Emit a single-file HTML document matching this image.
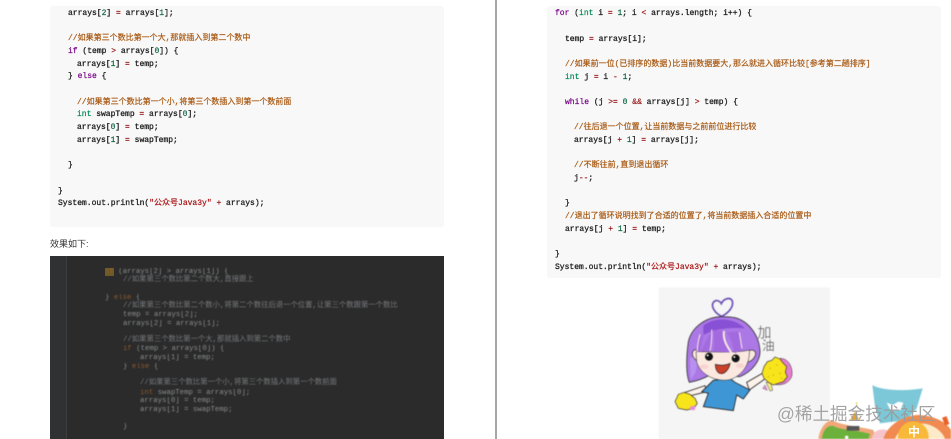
<!DOCTYPE html>
<html><head><meta charset="utf-8"><style>
html,body{margin:0;padding:0;background:#fff;width:951px;height:439px;overflow:hidden}
.a{position:absolute}
.c{position:absolute;margin-top:2px;font:8px/12px "Liberation Mono","Noto Sans CJK SC",monospace;white-space:pre;color:#222;-webkit-text-stroke:.3px #222;filter:blur(.35px)}
.m{color:#a85a14;-webkit-text-stroke:.2px #a85a14}
.k{color:#770088;-webkit-text-stroke:.2px #770088}
.t{color:#008855;-webkit-text-stroke:.2px #008855}
.n{color:#116644;-webkit-text-stroke:.2px #116644}
.o{color:#981a1a;-webkit-text-stroke:.2px #981a1a}
.s{color:#aa1111;-webkit-text-stroke:.2px #aa1111}
.d{position:absolute;font:7.35px/11px "Liberation Mono","Noto Sans CJK SC",monospace;white-space:pre;color:#8a8c8e;filter:blur(.45px)}
.d b{font-weight:normal;color:#8f5a2e}
.d u{text-decoration:none;color:#77797c}
</style></head><body>
<div class="a" style="left:50px;top:6px;width:394px;height:221px;background:#f8f8f8;border-radius:3px"></div>
<div class="a" style="left:547px;top:6px;width:394px;height:272px;background:#f8f8f8;border-radius:3px"></div>
<div class="a" style="left:495px;top:0;width:1.5px;height:439px;background:#a6a6a6"></div>

<div class="c" style="left:68px;top:6px">arrays[<span class="n">2</span>] <span class="o">=</span> arrays[<span class="n">1</span>];</div>
<div class="c m" style="left:68px;top:31px">//如果第三个数比第一个大,那就插入到第二个数中</div>
<div class="c" style="left:68px;top:44px"><span class="k">if</span> (temp <span class="o">&gt;</span> arrays[<span class="n">0</span>]) {</div>
<div class="c" style="left:77px;top:57px">arrays[<span class="n">1</span>] <span class="o">=</span> temp;</div>
<div class="c" style="left:68px;top:69px">} <span class="k">else</span> {</div>
<div class="c m" style="left:77px;top:95px">//如果第三个数比第一个小,将第三个数插入到第一个数前面</div>
<div class="c" style="left:77px;top:107px"><span class="t">int</span> swapTemp <span class="o">=</span> arrays[<span class="n">0</span>];</div>
<div class="c" style="left:77px;top:120px">arrays[<span class="n">0</span>] <span class="o">=</span> temp;</div>
<div class="c" style="left:77px;top:133px">arrays[<span class="n">1</span>] <span class="o">=</span> swapTemp;</div>
<div class="c" style="left:68px;top:158px">}</div>
<div class="c" style="left:58px;top:184px">}</div>
<div class="c" style="left:58px;top:196px">System.out.println(<span class="s">"公众号Java3y"</span> <span class="o">+</span> arrays);</div>

<div class="a" style="left:50px;top:238px;font:9px/12px 'Liberation Sans','Noto Sans CJK SC',sans-serif;color:#333;filter:blur(.25px)">效果如下:</div>

<div class="a" style="left:50px;top:256px;width:394px;height:183px;background:#2b2b2b;overflow:hidden">
<div class="d" style="left:55px;top:-8px"><u>//如果第三个数</u></div>
</div>
<div class="a" style="left:50px;top:256px;width:16px;height:183px;background:#303132;border-right:1px solid #3d3f41"></div>
<div class="a" style="left:105px;top:268px;width:9px;height:8px;background:#6f5a25"></div>
<div class="d" style="left:105px;top:266.5px"><b>if</b> (arrays[2] &gt; arrays[1]) {</div>
<div class="d" style="left:123px;top:274.5px"><u>//如果第三个数比第二个数大,直接跟上</u></div>
<div class="d" style="left:105px;top:292.5px">} <b>else</b> {</div>
<div class="d" style="left:123px;top:300.5px"><u>//如果第三个数比第二个数小,将第二个数往后退一个位置,让第三个数跟第一个数比</u></div>
<div class="d" style="left:123px;top:309.5px">temp = arrays[2];</div>
<div class="d" style="left:123px;top:318.5px">arrays[2] = arrays[1];</div>
<div class="d" style="left:123px;top:334.5px"><u>//如果第三个数比第一个大,那就插入到第二个数中</u></div>
<div class="d" style="left:123px;top:343.5px"><b>if</b> (temp &gt; arrays[0]) {</div>
<div class="d" style="left:140px;top:352.5px">arrays[1] = temp;</div>
<div class="d" style="left:123px;top:361.5px">} <b>else</b> {</div>
<div class="d" style="left:140px;top:377.5px"><u>//如果第三个数比第一个小,将第三个数插入到第一个数前面</u></div>
<div class="d" style="left:140px;top:387.5px"><b>int</b> swapTemp = arrays[0];</div>
<div class="d" style="left:140px;top:395.5px">arrays[0] = temp;</div>
<div class="d" style="left:140px;top:404.5px">arrays[1] = swapTemp;</div>
<div class="d" style="left:123px;top:421.5px">}</div>

<div class="c" style="left:555px;top:6px"><span class="k">for</span> (<span class="t">int</span> i <span class="o">=</span> <span class="n">1</span>; i <span class="o">&lt;</span> arrays.length; i++) {</div>
<div class="c" style="left:565px;top:32px">temp <span class="o">=</span> arrays[i];</div>
<div class="c m" style="left:565px;top:57px">//如果前一位(已排序的数据)比当前数据要大,那么就进入循环比较[参考第二趟排序]</div>
<div class="c" style="left:565px;top:70px"><span class="t">int</span> j <span class="o">=</span> i <span class="o">-</span> <span class="n">1</span>;</div>
<div class="c" style="left:565px;top:95px"><span class="k">while</span> (j <span class="o">&gt;=</span> <span class="n">0</span> <span class="o">&amp;&amp;</span> arrays[j] <span class="o">&gt;</span> temp) {</div>
<div class="c m" style="left:574px;top:120px">//往后退一个位置,让当前数据与之前前位进行比较</div>
<div class="c" style="left:574px;top:133px">arrays[j <span class="o">+</span> <span class="n">1</span>] <span class="o">=</span> arrays[j];</div>
<div class="c m" style="left:574px;top:158px">//不断往前,直到退出循环</div>
<div class="c" style="left:574px;top:171px">j<span class="o">--</span>;</div>
<div class="c" style="left:565px;top:196px">}</div>
<div class="c m" style="left:565px;top:209px">//退出了循环说明找到了合适的位置了,将当前数据插入合适的位置中</div>
<div class="c" style="left:565px;top:222px">arrays[j <span class="o">+</span> <span class="n">1</span>] <span class="o">=</span> temp;</div>
<div class="c" style="left:555px;top:247px">}</div>
<div class="c" style="left:555px;top:260px">System.out.println(<span class="s">"公众号Java3y"</span> <span class="o">+</span> arrays);</div>

<svg class="a" style="left:650px;top:280px;filter:blur(.4px)" width="301" height="159" viewBox="0 0 903 477">
<rect x="25" y="22" width="515" height="455" fill="#f5f5f5"/>
<g transform="translate(90 45)">
<!-- arms -->
<path d="M15 292L75 272L80 290L20 305Z" fill="#fdf2ea" stroke="#222" stroke-width="2.5"/>
<path d="M200 262L252 232L260 248L208 285Z" fill="#fdf2ea" stroke="#222" stroke-width="2.5"/>
<!-- shirt -->
<path d="M65 290L100 256L150 250L165 262L210 285L190 312L170 300L160 347L70 335L85 295Z" fill="#3f96d4" stroke="#222" stroke-width="2.5"/>
<!-- loop -->
<path d="M125 64C105 55 92 35 100 22C108 12 120 18 124 26C130 12 150 4 157 18C162 35 145 55 125 64Z" fill="#f5f5f5" stroke="#6b50b4" stroke-width="5"/>
<!-- hair -->
<path d="M125 65C80 65 35 95 25 140C18 190 18 240 28 262C50 258 72 250 90 240L180 245C215 230 240 200 240 170C238 120 205 78 165 68C150 65 135 65 125 65Z" fill="#ab78e6" stroke="#333" stroke-width="2.5"/>
<path d="M70 92C100 66 160 66 195 100C170 98 110 96 70 120Z" fill="#8850d4"/>
<path d="M30 190C40 180 60 190 45 235L32 255Z" fill="#b890ee"/>
<!-- ears -->
<path d="M52 165C36 160 32 180 45 192L58 205Z" fill="#fbe9e0" stroke="#222" stroke-width="2"/>
<path d="M205 168C222 160 232 172 224 185C218 196 208 202 200 200Z" fill="#fbe9e0" stroke="#222" stroke-width="2"/>
<!-- face -->
<path d="M48 170C90 170 170 175 208 165C210 205 190 240 150 254C110 262 60 240 50 200Z" fill="#fbe9e0" stroke="#222" stroke-width="1.5"/>
<ellipse cx="72" cy="215" rx="14" ry="7" fill="#f8d4d0"/><ellipse cx="180" cy="212" rx="12" ry="7" fill="#f8d4d0"/>
<!-- bangs -->
<path d="M50 172C52 150 58 130 72 112L60 170ZM62 170L98 100C96 130 96 150 94 168ZM100 170C104 150 102 125 100 105L132 108C128 130 140 150 152 172ZM140 112C155 130 160 160 165 175L182 165C180 145 180 130 178 110Z" fill="#a36ae0"/>
<path d="M132 108C128 135 142 155 156 176" fill="none" stroke="#fbe9e0" stroke-width="6"/>
<path d="M95 104C96 130 94 150 90 168M60 118C55 135 52 150 52 168M178 112C182 135 184 148 186 160" fill="none" stroke="#fbe9e0" stroke-width="3"/>
<!-- eyes/mouth -->
<circle cx="87" cy="185" r="12" fill="#111"/><circle cx="167" cy="190" r="12" fill="#111"/>
<circle cx="83" cy="181" r="3" fill="#fff"/><circle cx="163" cy="186" r="3" fill="#fff"/>
<path d="M106 208C120 212 135 212 150 205C148 222 135 236 124 236C112 236 106 222 106 208Z" fill="#cc3f28" stroke="#222" stroke-width="2"/>
<!-- pompoms -->
<path d="M258 262L270 288L278 286L272 262Z" fill="#f4e98a" stroke="#444" stroke-width="1.5"/>
<path d="M255 270L248 280L262 286Z" fill="#e88ad8" stroke="#444" stroke-width="1"/>
<path d="M300 190C330 190 340 225 335 245C325 268 300 272 285 268Z" fill="#e67cd0" stroke="#333" stroke-width="1.5"/>
<path d="M252 215L262 200L275 196L285 186L300 192L310 205L320 215L316 232L322 245L310 260L295 265L280 270L265 262L252 250L246 235Z" fill="#f7e41a" stroke="#333" stroke-width="2"/>
<g fill="#c8a81a"><circle cx="270" cy="220" r="2"/><circle cx="290" cy="210" r="2"/><circle cx="280" cy="240" r="2"/><circle cx="300" cy="235" r="2"/><circle cx="265" cy="245" r="2"/><circle cx="305" cy="250" r="2"/></g>
<path d="M-15 320L-5 298L12 292L30 298L45 310L52 325L42 340L20 345L-5 340Z" fill="#f7e41a" stroke="#333" stroke-width="2"/>
<path d="M30 335L45 332L45 345L30 345Z" fill="#e88ad8"/>
<text x="232" y="127" font-family="'Noto Sans CJK SC',sans-serif" font-size="42" font-weight="300" fill="#444" textLength="50">加</text>
<text x="246" y="165" font-family="'Noto Sans CJK SC',sans-serif" font-size="38" font-weight="300" fill="#444">油</text>
</g>
<!-- decoration -->
<path d="M667 315C690 330 760 335 818 325L800 385L770 420L690 430L675 380Z" fill="#7cc8d8"/>
<path d="M710 368L728 375L745 365L760 368L752 390L722 392Z" fill="#fff"/>
<path d="M548 420L600 395L650 430L660 462L560 440Z" fill="#fff"/>
<path d="M615 395L628 420H600Z" fill="#eda22a"/>
<path d="M505 477C510 445 525 425 545 420C570 435 630 440 670 450C680 477 680 477 680 477Z" fill="#f0a878"/>
<path d="M515 477C520 450 530 436 550 438C575 452 625 450 660 462L655 477Z" fill="#6bb13c"/>
<circle cx="590" cy="472" r="5" fill="#fff"/>
<path d="M590 438H628V452H590Z" fill="#555"/>
<path d="M665 477C668 455 690 438 720 455C735 465 740 477 740 477Z" fill="#f8c4cc"/>
<path d="M700 477C710 440 750 410 800 405C840 405 885 420 903 450V477Z" fill="#f08a50"/>
<path d="M735 477C745 445 790 425 830 432C860 440 880 460 885 477Z" fill="#fdeac8"/>
<circle cx="790" cy="470" r="46" fill="#f8b93a"/>
<circle cx="620" cy="370" r="3" fill="#f4d040"/>
<rect x="880" y="410" width="14" height="25" fill="#e8632a" transform="rotate(-20 887 422)"/>
</svg>
<div class="a" style="left:777px;top:403px;font:17.6px/22px 'Liberation Sans','Noto Sans CJK SC',sans-serif;color:#9b9b9b;opacity:.9;filter:blur(.3px);white-space:nowrap">@稀土掘金技术社区</div>
<div class="a" style="left:908px;top:425px;font:12px/14px 'Liberation Sans','Noto Sans CJK SC',sans-serif;color:#fff;font-weight:bold">中</div>
</body></html>
